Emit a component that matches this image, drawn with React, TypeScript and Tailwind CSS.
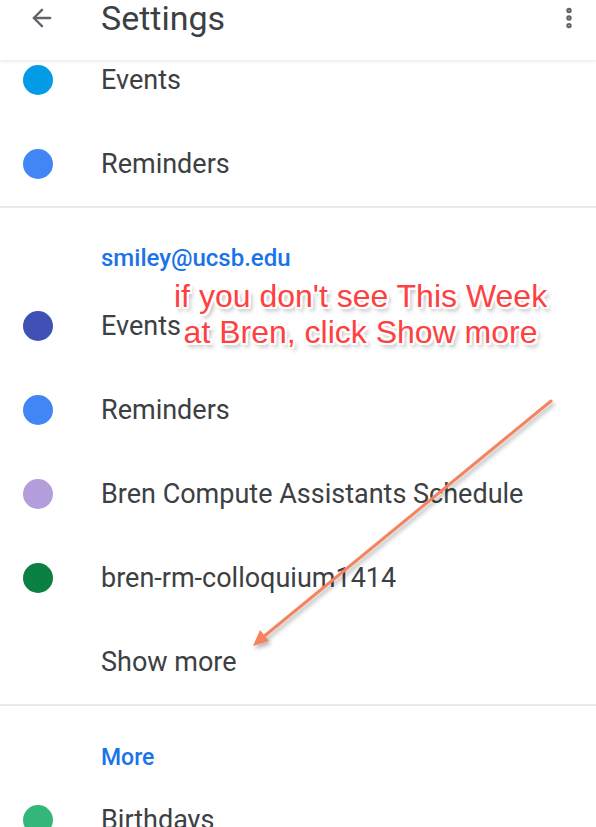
import { ArrowLeft, MoreVertical } from 'lucide-react';

interface CalendarRowProps {
  color: string;
  label: string;
}

function CalendarRow({ color, label }: CalendarRowProps) {
  return (
    <div className="flex h-[84px] items-center">
      <div className="w-[101px] shrink-0 pl-[23px]">
        <div className="h-[30px] w-[30px] rounded-full" style={{ backgroundColor: color }}></div>
      </div>
      <span className="text-[27px] leading-[32px] text-[#3c4043]">{label}</span>
    </div>
  );
}

export default function App() {
  return (
    <div
      className="relative h-[827px] w-[596px] overflow-hidden bg-white"
      style={{ fontFamily: 'Roboto, "Noto Sans", sans-serif' }}
    >
      <div className="relative z-10 flex h-[60px] items-start bg-white shadow-[0_2px_3px_rgba(0,0,0,0.08)]">
        <div className="flex h-[36px] w-[101px] items-center pl-[28px]">
          <ArrowLeft className="h-[28px] w-[28px] text-[#5f6368]" strokeWidth={2} />
        </div>
        <span className="text-[34px] leading-[36px] text-[#3c4043]">Settings</span>
        <div className="ml-auto flex h-[36px] items-center pr-[14px]">
          <MoreVertical className="h-[26px] w-[26px] text-[#5f6368]" strokeWidth={3} />
        </div>
      </div>

      {/* first account */}
      <div className="-mt-[22px] border-b-2 border-[#e8eaed]">
        <CalendarRow color="#039be5" label="Events" />
        <CalendarRow color="#4285f4" label="Reminders" />
      </div>

      {/* ucsb account */}
      <div className="border-b-2 border-[#e8eaed]">
        <div className="flex h-[76px] items-end pb-[12px] pl-[101px]">
          <span className="text-[24px] font-medium leading-[28px] text-[#1a73e8]">smiley@ucsb.edu</span>
        </div>
        <CalendarRow color="#3f51b5" label="Events" />
        <CalendarRow color="#4285f4" label="Reminders" />
        <CalendarRow color="#b39ddb" label="Bren Compute Assistants Schedule" />
        <CalendarRow color="#0b8043" label="bren-rm-colloquium1414" />
        <div className="flex h-[84px] items-center pl-[101px]">
          <span className="text-[27px] leading-[32px] text-[#3c4043]">Show more</span>
        </div>
      </div>

      <div className="flex h-[72px] items-end pb-[6px] pl-[101px]">
        <span className="text-[23px] font-medium leading-[28px] text-[#1a73e8]">More</span>
      </div>
      <CalendarRow color="#33b679" label="Birthdays" />

      {/* annotation */}
      <div
        className="absolute left-[174px] top-[278px] text-center text-[32px] leading-[36px] text-[#ff4040]"
        style={{
          fontFamily: '"Liberation Sans", Arial, sans-serif',
          textShadow:
            '-2px 0 #fff, 2px 0 #fff, 0 -2px #fff, 0 2px #fff, -2px -2px #fff, 2px 2px #fff, -2px 2px #fff, 2px -2px #fff, 3px 4px 4px rgba(0,0,0,0.35)',
        }}
      >
        if you don't see This Week
        <br />
        at Bren, click Show more
      </div>

      <svg className="absolute left-0 top-0" width="596" height="827">
        <defs>
          <filter id="sh" x="-10%" y="-10%" width="130%" height="130%">
            <feDropShadow dx="2" dy="3" stdDeviation="2" floodColor="#000" floodOpacity="0.3" />
          </filter>
        </defs>
        <g filter="url(#sh)">
          <line x1="551" y1="401" x2="262" y2="638" stroke="#f4845f" strokeWidth="3" strokeLinecap="round" />
          <polygon points="253,646 260,630 269,641" fill="#f4845f" />
        </g>
      </svg>
    </div>
  );
}
